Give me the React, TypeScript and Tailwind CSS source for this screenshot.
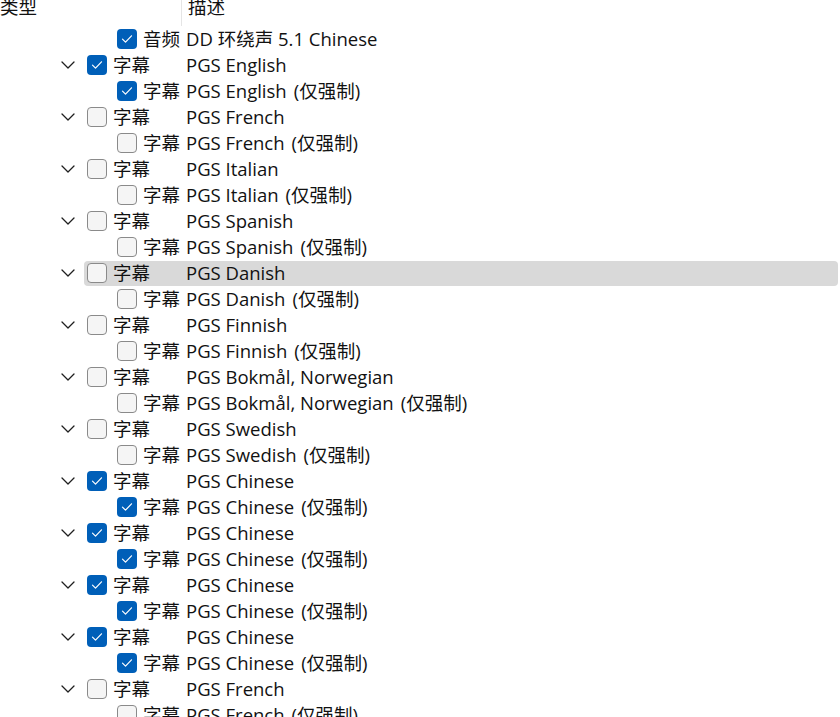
import React from 'react';

type Track = {
  level: 1 | 2;
  kind: string;
  desc: string;
  forced?: boolean;
  checked: boolean;
  selected?: boolean;
};

const pair = (lang: string, checked: boolean, selected = false): Track[] => [
  { level: 1, kind: '字幕', desc: `PGS ${lang}`, checked, selected },
  { level: 2, kind: '字幕', desc: `PGS ${lang}`, forced: true, checked },
];

const tracks: Track[] = [
  { level: 2, kind: '音频', desc: 'DD 环绕声 5.1 Chinese', checked: true },
  ...pair('English', true),
  ...pair('French', false),
  ...pair('Italian', false),
  ...pair('Spanish', false),
  ...pair('Danish', false, true),
  ...pair('Finnish', false),
  ...pair('Bokmål, Norwegian', false),
  ...pair('Swedish', false),
  ...pair('Chinese', true),
  ...pair('Chinese', true),
  ...pair('Chinese', true),
  ...pair('Chinese', true),
  ...pair('French', false),
];

const Chevron = () => (
  <svg width="14" height="8" viewBox="0 0 14 8" fill="none">
    <path d="M1 1l6 6 6-6" stroke="#1f1f1f" strokeWidth="1.3" strokeLinecap="round" strokeLinejoin="round" />
  </svg>
);

const Checkbox = ({ checked }: { checked: boolean }) =>
  checked ? (
    <div className="w-5 h-5 rounded-[4px] bg-[#005fb8] flex items-center justify-center shrink-0">
      <svg width="12" height="10" viewBox="0 0 12 10" fill="none">
        <path d="M1.5 5.2l3 3 6-6.4" stroke="#ffffff" strokeWidth="1.2" strokeLinecap="round" strokeLinejoin="round" />
      </svg>
    </div>
  ) : (
    <div className="w-5 h-5 rounded-[4px] border border-[#8a8a8a] bg-[#f5f5f5] shrink-0" />
  );

const Row = ({ track }: { track: Track }) => (
  <div className="flex h-[26px] items-center">
    <div className="w-[84px] h-full flex items-center justify-end pr-[9px] shrink-0">
      {track.level === 1 && <Chevron />}
    </div>
    <div
      className={`flex-1 mr-[2px] h-[25px] flex items-center rounded-[4px] ${
        track.selected ? 'bg-[#d9d9d9]' : ''
      }`}
    >
      <div
        className={`w-[102px] shrink-0 flex items-center gap-[6px] overflow-hidden ${
          track.level === 1 ? 'pl-[3px]' : 'pl-[33px]'
        }`}
      >
        <Checkbox checked={track.checked} />
        <span className="whitespace-nowrap">{track.kind}</span>
      </div>
      <span className="whitespace-nowrap">{track.desc}</span>
      {track.forced && <span className="whitespace-nowrap ml-[7px]">(仅强制)</span>}
    </div>
  </div>
);

export default function App() {
  return (
    <div
      className="w-[840px] h-[717px] overflow-hidden bg-white text-[#111111] text-[18.5px] leading-[24px]"
      style={{ fontFamily: '"Open Sans", "Noto Sans CJK SC", sans-serif' }}
    >
      <div className="flex h-[26px]">
        <div className="w-[182px] border-r border-[#e5e5e5] -mt-[5px] leading-[24px]">类型</div>
        <div className="pl-[6px] -mt-[5px] leading-[24px]">描述</div>
      </div>
      {tracks.map((t, i) => (
        <Row key={i} track={t} />
      ))}
    </div>
  );
}
